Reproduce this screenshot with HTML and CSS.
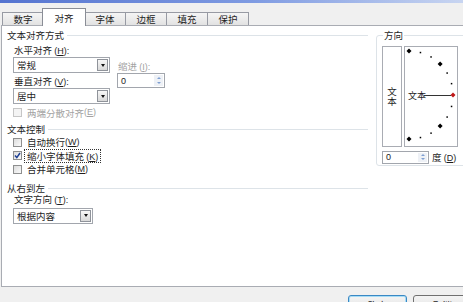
FILE: index.html
```html
<!DOCTYPE html>
<html lang="zh-CN">
<head>
  <meta charset="UTF-8" />
  <title>设置单元格格式 - 对齐</title>
  <link rel="stylesheet" href="styles.css">
</head>
<body>
  <div class="dialog">
    <div class="titlebar"></div>

    <div class="tabs">
      <div class="tab">数字</div>
      <div class="tab ativa">对齐</div>
      <div class="tab">字体</div>
      <div class="tab">边框</div>
      <div class="tab">填充</div>
      <div class="tab">保护</div>
    </div>

    <div class="panel">
      <!-- coluna esquerda -->
      <div class="left">
        <div class="section">文本对齐方式</div>
        <div class="align-block">
          <div class="align-main">
            <div class="label">水平对齐 <span class="key">(<u>H</u>):</span></div>
            <div class="select"><span>常规</span><span class="drop"></span></div>
            <div class="label label-v">垂直对齐 <span class="key">(<u>V</u>):</span></div>
            <div class="select"><span>居中</span><span class="drop"></span></div>
          </div>
          <div class="align-indent">
            <div class="label disabled">缩进 <span class="key">(<u>I</u>):</span></div>
            <div class="spinner"><span>0</span><span class="spin-btns"><i class="up"></i><i class="down"></i></span></div>
          </div>
        </div>
        <div class="check disabled row-justify"><span class="box"></span>两端分散对齐 <span class="key">(<u>E</u>)</span></div>

        <div class="section section-control">文本控制</div>
        <div class="check row-first"><span class="box"></span>自动换行 <span class="key">(<u>W</u>)</span></div>
        <div class="check"><span class="box checked">
          <svg width="7" height="7" viewBox="0 0 7 7"><path d="M1 3.6 L2.8 5.6 L6 1" fill="none" stroke="#1d3f94" stroke-width="1.5"/></svg>
        </span><span class="focus">缩小字体填充 <span class="key">(<u>K</u>)</span></span></div>
        <div class="check"><span class="box"></span>合并单元格 <span class="key">(<u>M</u>)</span></div>

        <div class="section section-rtl">从右到左</div>
        <div class="label">文字方向 <span class="key">(<u>T</u>):</span></div>
        <div class="select select-short"><span>根据内容</span><span class="drop"></span></div>
      </div>

      <!-- grupo direção -->
      <fieldset class="orient">
        <legend>方向</legend>
        <div class="orient-row">
          <div class="vtext">文本</div>
          <div class="dial">
            <svg width="52" height="99" viewBox="0 0 52 99">
              <g fill="#000">
                <polygon points="4,1.5 6.5,4 4,6.5 1.5,4"/>
                <rect x="14.7" y="4.8" width="1.5" height="1.5"/>
                <rect x="25.3" y="9.2" width="1.5" height="1.5"/>
                <polygon points="35.1,14.4 37.6,16.9 35.1,19.4 32.6,16.9"/>
                <rect x="41.4" y="25.3" width="1.5" height="1.5"/>
                <rect x="45.8" y="35.9" width="1.5" height="1.5"/>
                <rect x="45.8" y="58.7" width="1.5" height="1.5"/>
                <rect x="41.4" y="69.3" width="1.5" height="1.5"/>
                <polygon points="35.1,76.6 37.6,79.1 35.1,81.6 32.6,79.1"/>
                <rect x="25.3" y="85.4" width="1.5" height="1.5"/>
                <rect x="14.7" y="89.8" width="1.5" height="1.5"/>
                <polygon points="4,89.5 6.5,92 4,94.5 1.5,92"/>
              </g>
              <text x="3" y="51.5" class="dial-text">文本</text>
              <line x1="19" y1="48.5" x2="46" y2="48.5" stroke="#333" stroke-width="1"/>
              <polygon points="48,45.5 50.5,48 48,50.5 45.5,48" fill="#c01818"/>
            </svg>
          </div>
        </div>
        <div class="degree">
          <div class="spinner spinner-deg"><span>0</span><span class="spin-btns"><i class="up"></i><i class="down"></i></span></div>
          <span class="degree-label">度 <span class="key">(<u>D</u>)</span></span>
        </div>
      </fieldset>
    </div>

    <div class="footer">
      <button class="btn btn-default">确定</button>
      <button class="btn">取消</button>
    </div>
  </div>
</body>
</html>
```

FILE: styles.css
```css
* {
  box-sizing: border-box;
}
body {
  margin: 0;
  background: #f0f0f0;
  font-family: "Noto Sans CJK SC", sans-serif;
  font-size: 9.5px;
  color: #1e1e1e;
}
.dialog {
  width: 463px;
  height: 302px;
  overflow: hidden;
  display: flex;
  flex-direction: column;
}
.titlebar {
  flex: none;
  height: 3px;
  background: linear-gradient(to right, #5574d0, #7f9be2 55%, #c8d5f1);
}
.tabs {
  flex: none;
  display: flex;
  align-items: flex-end;
  height: 22px;
  padding-left: 2px;
}
.tab {
  width: 42px;
  height: 13px;
  line-height: 12px;
  text-align: center;
  border: 1px solid #979aa3;
  border-bottom: none;
  margin-right: -1px;
  background: linear-gradient(#f5f5f5, #e2e2e2);
}
.tab.ativa {
  position: relative;
  height: 18px;
  width: 44px;
  margin: 0 -2px -1px -1px;
  padding-top: 3px;
  background: #fff;
  border-color: #8a8d96;
}
.panel {
  flex: none;
  height: 262px;
  margin: 0 -6px 0 1px;
  background: #fff;
  border: 1px solid #a9acb3;
  display: flex;
  gap: 8px;
  padding: 4px 0 0 5px;
}
.left {
  width: 361px;
}
.section {
  display: flex;
  align-items: center;
  gap: 3px;
  height: 11px;
  line-height: 11px;
}
.section::after {
  content: "";
  flex: 1;
  height: 1px;
  background: #dde3e8;
}
.section-control {
  margin-top: 4px;
}
.section-rtl {
  margin-top: 6.5px;
}
.key {
  font-family: "Liberation Sans", sans-serif;
  font-size: 9px;
  line-height: 1;
}
.label {
  height: 11px;
  line-height: 11px;
  padding-left: 7px;
  white-space: nowrap;
}
.align-block {
  display: flex;
  gap: 7px;
  padding-left: 6px;
  margin-top: 4px;
}
.align-block .label {
  padding-left: 1px;
}
.align-main {
  width: 97px;
}
.label-v {
  margin-top: 3px;
}
.align-indent {
  padding-top: 16px;
}
.disabled {
  color: #a3a3a3;
}
.select {
  display: flex;
  align-items: center;
  justify-content: space-between;
  height: 16px;
  margin-top: 1px;
  padding: 0 1px 0 3px;
  border: 1px solid #a2a6ad;
  background: #fff;
}
.select-short {
  width: 80px;
  margin: 3px 0 0 6px;
}
.drop {
  width: 11px;
  height: 12px;
  border: 1px solid #8f939a;
  background: linear-gradient(#f7f7f7, #d9d9d9);
  display: flex;
  align-items: center;
  justify-content: center;
}
.drop::after {
  content: "";
  border-left: 2.5px solid transparent;
  border-right: 2.5px solid transparent;
  border-top: 3px solid #111;
}
.spinner {
  display: flex;
  align-items: center;
  justify-content: space-between;
  width: 48px;
  height: 15px;
  margin-top: 1px;
  padding: 0 1px 0 3px;
  border: 1px solid #a2a6ad;
  font-family: "Liberation Sans", sans-serif;
  font-size: 9px;
  color: #222;
}
.spin-btns {
  width: 9px;
  height: 11px;
  display: flex;
  flex-direction: column;
  align-items: center;
  justify-content: space-around;
  background: #eef1f6;
}
.spin-btns i {
  border-left: 2.5px solid transparent;
  border-right: 2.5px solid transparent;
}
.spin-btns .up {
  border-bottom: 2.5px solid #7f9fd1;
}
.spin-btns .down {
  border-top: 2.5px solid #7f9fd1;
}
.check {
  display: flex;
  align-items: center;
  height: 13.5px;
  padding-left: 6px;
  white-space: nowrap;
}
.row-justify {
  margin-top: 2px;
}
.row-first {
  margin-top: 1px;
}
.box {
  width: 9px;
  height: 9px;
  margin-right: 5px;
  border: 1px solid #8e8f8f;
  background: linear-gradient(135deg, #dcdcdc, #fbfbfb);
  display: flex;
  align-items: center;
  justify-content: center;
}
.disabled .box {
  border-color: #c6c6c6;
  background: #f4f4f4;
}
.focus {
  outline: 1px dotted #333;
  padding: 0 2px;
  margin-left: -2px;
  line-height: 12px;
}
.orient {
  width: 92px;
  height: 136px;
  margin: 0;
  padding: 5px 0 0 5px;
  border: 1px solid #dde3e8;
  border-radius: 3px;
}
.orient legend {
  padding: 0 1px;
  margin-left: 1px;
  line-height: 11px;
}
.orient-row {
  display: flex;
  gap: 2px;
}
.vtext {
  width: 20px;
  height: 101px;
  border: 1px solid #a9acb3;
  writing-mode: vertical-rl;
  text-orientation: upright;
  display: flex;
  align-items: center;
  justify-content: center;
  line-height: 10px;
}
.dial {
  width: 54px;
  height: 101px;
  border: 1px solid #a9acb3;
}
.dial svg {
  display: block;
}
.dial-text {
  font-family: "Noto Sans CJK SC", sans-serif;
  font-size: 9px;
  fill: #1e1e1e;
}
.degree {
  display: flex;
  align-items: center;
  gap: 3px;
  margin-top: 3px;
}
.spinner-deg {
  width: 47px;
  height: 13px;
  margin-top: 0;
}
.spinner-deg .spin-btns {
  height: 9px;
}
.footer {
  flex: none;
  display: flex;
  justify-content: flex-end;
  gap: 6px;
  margin-right: -9px;
  padding-top: 8px;
}
.btn {
  width: 59px;
  height: 20px;
  padding: 0;
  font-family: "Noto Sans CJK SC", sans-serif;
  font-size: 9.5px;
  color: #1e1e1e;
  border: 1px solid #707070;
  border-radius: 3px;
  background: linear-gradient(#f4f4f4, #dedede);
}
.btn-default {
  border-color: #3a88c4;
  box-shadow: inset 0 0 0 1px #a6dcf6;
}
```
